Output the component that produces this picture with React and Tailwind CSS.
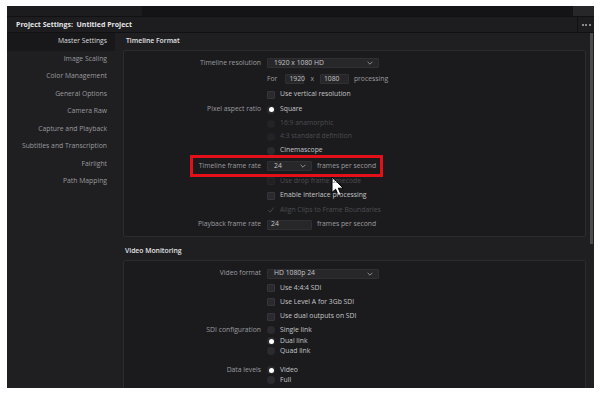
import React from "react";

const sideItems = [
  "Master Settings",
  "Image Scaling",
  "Color Management",
  "General Options",
  "Camera Raw",
  "Capture and Playback",
  "Subtitles and Transcription",
  "Fairlight",
  "Path Mapping",
];

const Chevron = () => (
  <svg width="6" height="4" viewBox="0 0 6 4" className="shrink-0">
    <path d="M0.6 0.8 L3 3.2 L5.4 0.8" fill="none" stroke="#9a9a9e" strokeWidth="0.9" />
  </svg>
);

const Dropdown = ({ value, w }) => (
  <div className={`${w} h-[10px] flex items-center justify-between pl-[6px] pr-[5px] bg-[#27272a] border border-[#303034] rounded-[1px] text-[#c4c4c6]`}>
    <span>{value}</span>
    <Chevron />
  </div>
);

const Input = ({ value, w }) => (
  <div className={`${w} h-[10px] flex items-center pl-[3px] bg-[#27272a] border border-[#303034] rounded-[1px] text-[#c4c4c6]`}>
    {value}
  </div>
);

const Check = ({ label, dim }) => (
  <div className="flex items-center gap-[5px]">
    <div className={`w-[8px] h-[8px] rounded-[1px] border ${dim ? "bg-[#212124] border-[#262629]" : "bg-[#2a2a2e] border-[#36363a]"}`} />
    <span className={dim ? "text-[#4c4c50]" : "text-[#c4c4c6]"}>{label}</span>
  </div>
);

const Radio = ({ label, on, dim }) => (
  <div className="flex items-center gap-[5px]">
    <div className={`w-[8px] h-[8px] rounded-full flex items-center justify-center ${dim ? "bg-[#232326]" : "bg-[#2b2b2f]"}`}>
      {on && <div className="w-[5px] h-[5px] rounded-full bg-white" />}
    </div>
    <span className={dim ? "text-[#4c4c50]" : "text-[#c4c4c6]"}>{label}</span>
  </div>
);

const Row = ({ label, h, children, className = "" }) => (
  <div className={`${h} flex items-center relative ${className}`}>
    <div className="w-[137px] text-right text-[#9c9c9f] shrink-0">{label}</div>
    <div className="ml-[6px] flex items-center gap-[5px]">{children}</div>
  </div>
);

export default function App() {
  return (
    <div className="w-[600px] h-[394px] bg-white pt-[6px] pl-[7px] pr-[6px] pb-[6px] font-['Open_Sans',sans-serif] text-[6.8px] leading-none">
      <div className="h-full flex flex-col bg-[#1f1f22] relative overflow-hidden">
        {/* top strip */}
        <div className="h-[10px] flex shrink-0">
          <div className="w-[135px] bg-[#1c1c1f]" />
          <div className="flex-1 bg-[#141416]" />
          <div className="w-[21px] bg-[#27272a]" />
        </div>
        {/* title bar */}
        <div className="h-[17px] flex items-stretch bg-[#1d1d20] border-t border-[#111113] border-b border-b-[#111113] shrink-0">
          <div className="flex-1 flex items-center pl-[9px] text-[7px] font-bold text-[#e4e4e6]">
            Project Settings:&nbsp; Untitled Project
          </div>
          <div className="w-[17px] border-l border-[#111113] flex items-center justify-center gap-[1.5px]">
            <div className="w-[2px] h-[2px] bg-[#8a8a8e]" />
            <div className="w-[2px] h-[2px] bg-[#8a8a8e]" />
            <div className="w-[2px] h-[2px] bg-[#8a8a8e]" />
          </div>
        </div>

        <div className="flex-1 flex min-h-0">
          {/* sidebar */}
          <div className="w-[108px] shrink-0">
            {sideItems.map((s, i) => (
              <div
                key={s}
                className={`h-[17.5px] flex items-center justify-end pr-[8px] ${i === 0 ? "bg-[#18181a] text-[#dcdcde]" : "text-[#9a9a9d]"}`}
              >
                {s}
              </div>
            ))}
          </div>

          {/* content */}
          <div className="flex-1 min-w-0 pl-[8px] pr-[3px]">
            <div className="h-[17px] flex items-center pl-[3px] text-[#e2e2e4] font-semibold">Timeline Format</div>
            <div className="bg-[#1b1b1e] border border-[#2c2c30] rounded-[2px] pt-[4px] pb-[4px]">
              <Row label="Timeline resolution" h="h-[16px]">
                <Dropdown value="1920 x 1080 HD" w="w-[112px]" />
              </Row>
              <Row label="" h="h-[16px]">
                <span className="text-[#9c9c9f] mr-[3px]">For</span>
                <Input value="1920" w="w-[19px]" />
                <span className="text-[#9c9c9f] mx-[1px]">x</span>
                <Input value="1080" w="w-[29px]" />
                <span className="text-[#9c9c9f]">processing</span>
              </Row>
              <Row label="" h="h-[15px]">
                <Check label="Use vertical resolution" />
              </Row>
              <Row label="Pixel aspect ratio" h="h-[15px]">
                <Radio label="Square" on />
              </Row>
              <Row label="" h="h-[13px]">
                <Radio label="16:9 anamorphic" dim />
              </Row>
              <Row label="" h="h-[13px]">
                <Radio label="4:3 standard definition" dim />
              </Row>
              <Row label="" h="h-[15px]">
                <Radio label="Cinemascope" />
              </Row>
              <Row label="Timeline frame rate" h="h-[16px]">
                <Dropdown value="24" w="w-[45px]" />
                <span className="text-[#9c9c9f]">frames per second</span>
                <div className="absolute left-[66px] top-[-3px] w-[193px] h-[22px] border-[3px] border-[#e3101a]" />
                <svg
                  className="absolute left-[207px] top-[18px]"
                  width="14"
                  height="21"
                  viewBox="0 0 14 21"
                >
                  <path
                    d="M1 1 L1 16.5 L4.6 13.2 L7.4 19.6 L10 18.5 L7.3 12.2 L12.2 12.2 Z"
                    fill="#ffffff"
                    stroke="#000000"
                    strokeWidth="1"
                    strokeLinejoin="round"
                  />
                </svg>
              </Row>
              <Row label="" h="h-[14px]">
                <Check label="Use drop frame timecode" dim />
              </Row>
              <Row label="" h="h-[15px]">
                <Check label="Enable interlace processing" />
              </Row>
              <Row label="" h="h-[14px]">
                <div className="flex items-center gap-[5px]">
                  <svg width="8" height="8" viewBox="0 0 8 8">
                    <path d="M1.2 4.2 L3.2 6.2 L6.8 1.6" fill="none" stroke="#4c4c50" strokeWidth="0.9" />
                  </svg>
                  <span className="text-[#4c4c50]">Align Clips to Frame Boundaries</span>
                </div>
              </Row>
              <Row label="Playback frame rate" h="h-[15px]">
                <Input value="24" w="w-[45px]" />
                <span className="text-[#9c9c9f]">frames per second</span>
              </Row>
            </div>

            <div className="h-[23px] pt-[9px] pl-[2px] text-[#e2e2e4] font-semibold leading-[10px]">Video Monitoring</div>
            <div className="bg-[#1b1b1e] border border-[#2c2c30] rounded-[2px] pt-[5px] pb-[8px]">
              <Row label="Video format" h="h-[15px]">
                <Dropdown value="HD 1080p 24" w="w-[112px]" />
              </Row>
              <Row label="" h="h-[14px]">
                <Check label="Use 4:4:4 SDI" />
              </Row>
              <Row label="" h="h-[14px]">
                <Check label="Use Level A for 3Gb SDI" />
              </Row>
              <Row label="" h="h-[15px]">
                <Check label="Use dual outputs on SDI" />
              </Row>
              <Row label="SDI configuration" h="h-[12px]">
                <Radio label="Single link" />
              </Row>
              <Row label="" h="h-[10px]">
                <Radio label="Dual link" on />
              </Row>
              <Row label="" h="h-[10px]">
                <Radio label="Quad link" />
              </Row>
              <Row label="Data levels" h="h-[10px]" className="mt-[9px]">
                <Radio label="Video" on />
              </Row>
              <Row label="" h="h-[10px]">
                <Radio label="Full" />
              </Row>
            </div>
          </div>

          {/* scrollbar */}
          <div className="w-[5px] shrink-0 pl-[1px]">
            <div className="w-[3px] h-[211px] bg-[#4b4b4f]" />
          </div>
        </div>
      </div>
    </div>
  );
}
